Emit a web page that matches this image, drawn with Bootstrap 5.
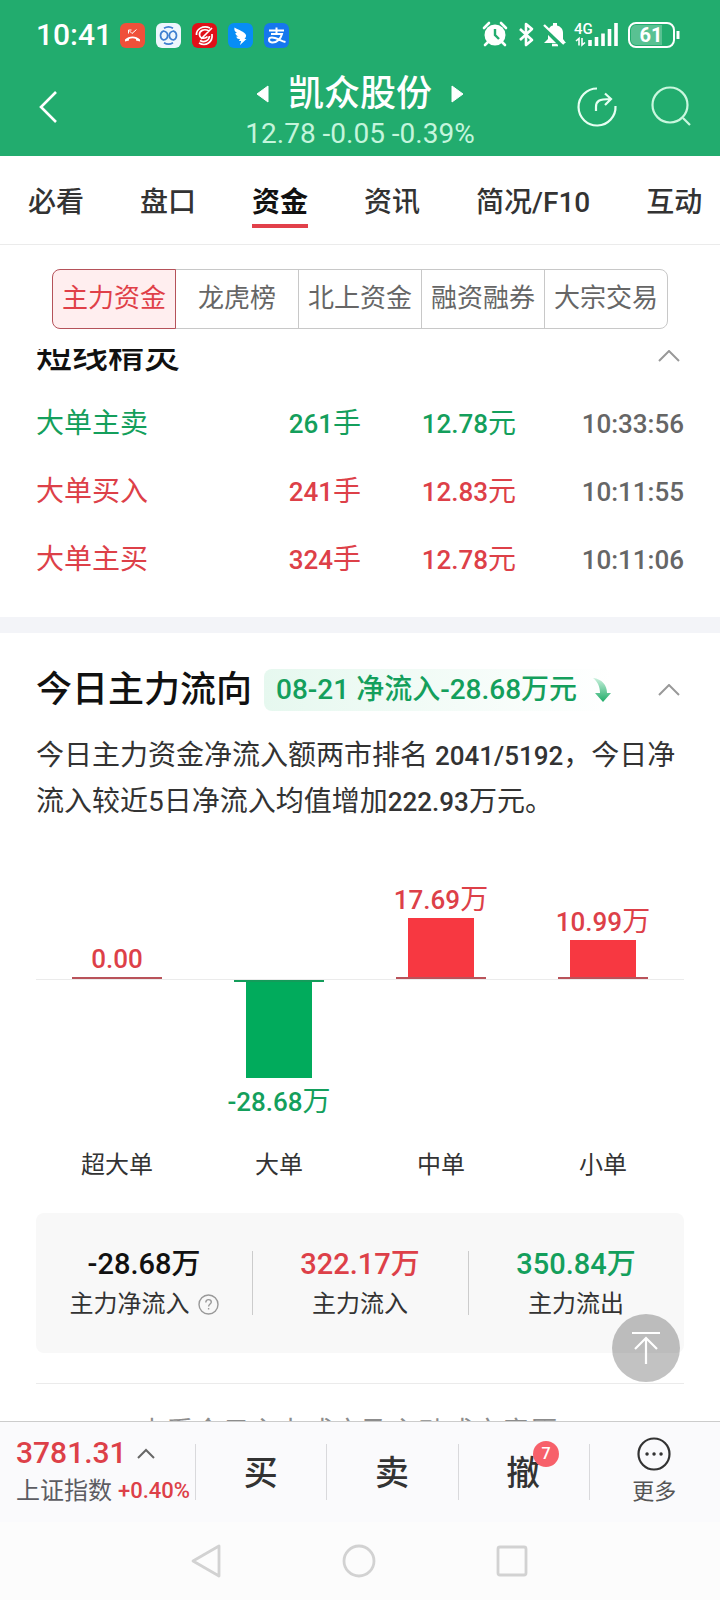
<!DOCTYPE html>
<html lang="zh-CN">
<head>
<meta charset="utf-8">
<meta name="viewport" content="width=device-width, initial-scale=1">
<title>凯众股份 - 主力资金</title>
<link href="https://cdn.jsdelivr.net/npm/bootstrap@5.3.0/dist/css/bootstrap.min.css" rel="stylesheet">
<style>
  :root { --up: #dd4048; --down: #149f5c; --ink: #111; --ink-2: #333; --ink-3: #666; }
  body { font-family: Roboto, "Noto Sans CJK SC", sans-serif; font-size: 28px; line-height: 40px; color: var(--ink-2); background: #fff; }
  svg { display: block; flex: none; fill: none; }
  a { color: inherit; text-decoration: none; }
  button { font: inherit; color: inherit; background: none; border: 0; padding: 0; }
  .app { height: 100vh; }
  .fig { font-size: 26px; font-weight: 500; }
  .up { color: var(--up) !important; }
  .down { color: var(--down) !important; }

  .top { background: #22ac6e; color: #fff; height: 156px; }
  .status { padding: 14px 40px 0 36px; height: 56px; }
  .clock { font-size: 30px; font-weight: 500; width: 84px; }
  .apps { gap: 11px; }
  .titlebar { display: grid; grid-template-columns: 1fr auto 1fr; height: 96px; padding: 0 28px; }
  .titlebar .side { padding-top: 6px; }
  .stock { font-size: 36px; line-height: 44px; font-weight: 500; gap: 19px; }
  .quote { color: #c4f5dc; line-height: 36px; }

  .tabs { height: 89px; padding: 4px 18px 0 28px; gap: 56px; font-size: 28px; border-bottom: 1px solid #ebebeb; overflow: hidden; }
  .tabs a { white-space: nowrap; font-weight: 500; line-height: 38px; border-bottom: 4px solid transparent; padding: 8px 0 2px; }
  .tabs a.on { color: var(--ink); font-weight: 700; border-color: #e2404a; }

  .seg { margin: 24px 52px 20px; height: 60px; font-size: 26px; color: var(--ink-3); }
  .seg a { border: 1px solid #c8c8c8; margin-left: -1px; line-height: 56px; text-align: center; flex: 1 1 0; white-space: nowrap; }
  .seg a:first-child { border-radius: 8px 0 0 8px; margin-left: 0; }
  .seg a:last-child { border-radius: 0 8px 8px 0; }
  .seg a.on { background: #ffeeef; border-color: #b5525a; color: #e03f48; z-index: 1; }

  .pane { padding: 0 36px; }
  .scrolled { margin-top: -18px; }
  h2 { font-size: 36px; line-height: 50px; font-weight: 500; color: var(--ink); margin: 0; }
  .fold { padding: 0 4px; }

  .trades { width: 100%; table-layout: fixed; margin: 9px 0 23px; }
  .trades td { height: 68px; padding: 0; vertical-align: middle; }
  .trades td:nth-child(1) { width: 39%; }
  .trades td:nth-child(2) { width: 133px; }
  .trades td:nth-child(4) { width: 20%; text-align: right; color: var(--ink-3); }
  .band { height: 16px; background: #f3f4f8; }

  .net { background: linear-gradient(90deg, #e6f8ef, #fff); border-radius: 8px; padding: 1px 0 1px 12px; margin-left: 12px; gap: 15px; font-weight: 500; }
  .brief { line-height: 46px; margin: 18px 0 0; }

  .chart { display: grid; grid-template-columns: repeat(4, 1fr); margin-top: 54px; }
  .over { height: 101px; border-bottom: 1px solid #ebebeb; line-height: 36px; }
  .under { height: 167px; line-height: 36px; }
  .tip { width: 90px; height: 2px; }
  .stick { width: 66px; }
  .bg-up { background: #f73841; }
  .bg-down { background: #01ab5c; }
  .tip.bg-up { background: #b9535a; }
  .tip.bg-down { background: #139c5a; }
  .below { padding-top: 6px; }
  .kind { font-size: 24px; line-height: 36px; }

  .sums { background: #f8f8f8; border-radius: 8px; margin-top: 30px; padding: 30px 0; height: 140px; }
  .sums > div { flex: 1 1 0; position: relative; }
  .sums > div + div::before { content: ""; position: absolute; left: 0; top: 8px; height: 64px; width: 1px; background: #ccc; }
  .sum { font-size: 29px; font-weight: 500; color: var(--ink); line-height: 42px; }
  .sum-name { font-size: 24px; line-height: 38px; gap: 8px; }
  .more { margin-top: 30px; border-top: 1px solid #ebebeb; padding-top: 29px; color: #8c8c8c; }
  .more a { gap: 12px; }
  .to-top { position: absolute; right: 40px; bottom: 39px; width: 68px; height: 68px; border-radius: 50%; background: rgba(0, 0, 0, .24); }

  .dock { height: 101px; background: #fafafc; border-top: 1px solid #ccc; }
  .dock > * { flex: 1 1 0; position: relative; }
  .dock > * + *::before { content: ""; position: absolute; left: 0; top: 22px; height: 56px; width: 1px; background: #d9d9dc; }
  .dock .index { flex: 0 0 195px; padding: 10px 0 0 16px; }
  .index .last { font-size: 30px; line-height: 42px; font-weight: 500; gap: 10px; }
  .index .name { font-size: 24px; line-height: 34px; color: #5c5c62; gap: 6px; white-space: nowrap; }
  .index .pct { font-size: 22px; font-weight: 500; }
  .act { font-size: 34px; font-weight: 500; padding-top: 2px; }
  .count { position: absolute; left: 50%; top: 19px; margin-left: 10px; width: 26px; height: 26px; border-radius: 50%; background: #f7606a; color: #fff; font-size: 16px; line-height: 26px; }
  .extra { font-size: 22px; line-height: 32px; color: #555; gap: 4px; }
  .sys { height: 78px; background: #fcfcfc; padding: 0 192px 0 191px; }
</style>
</head>
<body>
<div class="app d-flex flex-column overflow-hidden">
  <header class="top flex-shrink-0">
    <div class="status d-flex align-items-center justify-content-between">
      <div class="d-flex align-items-center">
        <span class="clock">10:41</span>
        <div class="apps d-flex">
          <svg width="25" height="25" viewBox="0 0 25 25"><rect width="25" height="25" rx="6" fill="#f0503a"/><path d="M5 18.500v-2c4-4 11-4 15 0v2l-4-1v-1.500c-2-1-5-1-7 0v1.500z" fill="#fff"/><path d="M8.500 10.500V7h3M9 7.500l3 3 4.500-4" stroke="#fff"/></svg>
          <svg width="25" height="25" viewBox="0 0 25 25"><rect width="25" height="25" rx="6" fill="#eef6fd"/><path d="M8 5.200a8.500 8.500 0 0 1 9 0M8 19.800a8.500 8.500 0 0 0 9 0M7.500 8c5.500 1 5.500 8 0 9-4-1.500-4-7.500 0-9zM17.500 8c-5.500 1-5.500 8 0 9 4-1.500 4-7.500 0-9z" stroke="#3e7fd0" stroke-width="1.700"/></svg>
          <svg width="25" height="25" viewBox="0 0 25 25"><rect width="25" height="25" rx="6" fill="#e01018"/><path d="M18 5C11 2 4 6 4.500 12M7 20c7 4 14-1 13-9M17 8c-5-3-10 0-9.500 4s6 4 8 1.500M8 17.500c4 2.500 9 .500 9.500-4.500M20 5L9 16" stroke="#fff" stroke-width="1.700"/></svg>
          <svg width="25" height="25" viewBox="0 0 25 25"><rect width="25" height="25" rx="6" fill="#078df5"/><path d="M6.500 4.500c4 2.500 10 4 11.500 7.500.500 1.500-.800 3-1.500 4h2L12 22l1.200-4H11l1-2c-3 0-3.500-1.500-3.500-2.500h2C7.500 12 7.500 11 7.500 10h1.500C6.500 8.500 6 6.500 6.500 4.500z" fill="#fff"/></svg>
          <svg width="25" height="25" viewBox="0 0 25 25"><rect width="25" height="25" rx="6" fill="#1677ee"/><path d="M5 7.500h15M12.500 4.500V11M7 11h11c-1 4-5 9-10 8.500-4-.500-4-5 0-5s9 3.500 13.500 4.500" stroke="#fff" stroke-width="2"/></svg>
        </div>
      </div>
      <svg width="198" height="28" viewBox="0 0 198 28">
        <circle cx="13" cy="14" r="10.500" fill="#fff"/><path d="M2 7l5-5M24 7l-5-5M6 21l-3 3M20 21l3 3" stroke="#fff" stroke-width="2.600" stroke-linecap="round"/>
        <path d="M13 8v6l4 4" stroke="#22ac6e" stroke-width="2.400"/>
        <path d="M38 8l12 11-6 5V3l6 5-12 11" stroke="#fff" stroke-width="2.600" stroke-linejoin="round"/>
        <path d="M62 22l4-4V12c0-4 2-7 5-7.500V2h4v2.500c4 1 6 4 6 7.500v6l3 4z" fill="#fff"/><path d="M70 24h6" stroke="#fff" stroke-width="2.600"/>
        <path d="M61 6l20 20" stroke="#22ac6e" stroke-width="4"/><path d="M62 4l20 19" stroke="#fff" stroke-width="2.400"/>
        <text x="92" y="13" fill="#fff" font-size="15" font-weight="500">4G</text>
        <path d="M94 20l3-2.500v7M100 17v7l3-2.500" stroke="#fff" stroke-width="1.600"/>
        <path d="M108 19v6M114.500 16v9M121 12.500V25M127.500 8v17M134 2v23" stroke="#fff" stroke-width="3.600"/>
        <rect x="147" y="2" width="45" height="24" rx="7" stroke="#fff" stroke-width="2"/><path d="M154 4h26v20h-26a5 5 0 0 1-5-5V9a5 5 0 0 1 5-5z" fill="#fff" opacity=".25"/>
        <path d="M196 10v8" stroke="#fff" stroke-width="3"/>
        <text x="169" y="21" text-anchor="middle" fill="#fff" font-size="20" font-weight="700">61</text>
      </svg>
    </div>
    <div class="titlebar">
      <div class="side d-flex align-items-center ps-2"><button type="button" aria-label="返回"><svg width="24" height="36" viewBox="0 0 24 36"><path d="M20 3L5 18l15 15" stroke="#fff" stroke-width="2.600"/></svg></button></div>
      <div class="text-center pt-3">
        <div class="stock d-flex align-items-center justify-content-center">
          <svg width="13" height="18" viewBox="0 0 13 18"><path d="M12 1v16L1 9z" fill="#fff" stroke="#fff" stroke-linejoin="round"/></svg>
          <span>凯众股份</span>
          <svg width="13" height="18" viewBox="0 0 13 18"><path d="M1 1v16L12 9z" fill="#fff" stroke="#fff" stroke-linejoin="round"/></svg>
        </div>
        <div class="quote">12.78 -0.05 -0.39%</div>
      </div>
      <div class="side d-flex justify-content-end align-items-center">
        <button type="button" aria-label="分享" class="me-4 pe-2"><svg width="42" height="42" viewBox="0 0 42 42" stroke="#e6fff2" stroke-width="2.200"><path d="M21 2.500A18.500 18.500 0 1 0 39.500 20M20 25v-4c0-6 3-8 14-8M29 7.500l6 5.500-6 6"/></svg></button>
        <button type="button" aria-label="搜索"><svg width="42" height="42" viewBox="0 0 42 42" stroke="#c9f7de" stroke-width="2.200"><circle cx="20" cy="19" r="17.500"/><path d="M33 32l7 7"/></svg></button>
      </div>
    </div>
  </header>

  <nav class="tabs d-flex align-items-center flex-shrink-0">
    <a href="#">必看</a><a href="#">盘口</a><a href="#" class="on">资金</a><a href="#">资讯</a><a href="#">简况/F10</a><a href="#">互动</a>
  </nav>
  <nav class="seg d-flex flex-shrink-0">
    <a href="#" class="on position-relative">主力资金</a><a href="#">龙虎榜</a><a href="#">北上资金</a><a href="#">融资融券</a><a href="#">大宗交易</a>
  </nav>

  <div class="position-relative flex-fill d-flex flex-column" style="min-height:0">
  <main class="flex-fill overflow-hidden">
    <section class="pane scrolled">
      <div class="d-flex justify-content-between align-items-center">
        <h2>短线精灵</h2>
        <button type="button" class="fold" aria-label="收起"><svg width="22" height="12" viewBox="0 0 22 12"><path d="M1 11L11 1l10 10" stroke="#999" stroke-width="2"/></svg></button>
      </div>
      <table class="trades">
        <tr><td class="down">大单主卖</td><td class="down"><span class="fig">261</span>手</td><td class="down"><span class="fig">12.78</span>元</td><td><span class="fig">10:33:56</span></td></tr>
        <tr><td class="up">大单买入</td><td class="up"><span class="fig">241</span>手</td><td class="up"><span class="fig">12.83</span>元</td><td><span class="fig">10:11:55</span></td></tr>
        <tr><td class="up">大单主买</td><td class="up"><span class="fig">324</span>手</td><td class="up"><span class="fig">12.78</span>元</td><td><span class="fig">10:11:06</span></td></tr>
      </table>
    </section>
    <div class="band"></div>
    <section class="pane pt-4 mt-2">
      <div class="d-flex align-items-center">
        <h2>今日主力流向</h2>
        <div class="net down d-flex align-items-center">
          <span>08-21 净流入-28.68万元</span>
          <svg width="20" height="26" viewBox="0 0 20 26"><defs><linearGradient id="fall" x2="0" y2="1"><stop stop-color="#c9f0dc"/><stop offset="1" stop-color="#1fac68"/></linearGradient></defs><path d="M1 1c9 1 14 7 14 15h4l-8 9-8-9h5C8 10 6 5 1 1z" fill="url(#fall)"/></svg>
        </div>
        <button type="button" class="fold ms-auto" aria-label="收起"><svg width="22" height="12" viewBox="0 0 22 12"><path d="M1 11L11 1l10 10" stroke="#999" stroke-width="2"/></svg></button>
      </div>
      <p class="brief">今日主力资金净流入额两市排名 <span class="fig">2041/5192</span>，今日净流入较近5日净流入均值增加<span class="fig">222.93</span>万元。</p>

      <div class="chart">
        <div class="over d-flex flex-column align-items-center justify-content-end up"><span class="fig">0.00</span><div class="tip bg-up"></div></div>
        <div class="over"></div>
        <div class="over d-flex flex-column align-items-center justify-content-end up"><span><span class="fig">17.69</span>万</span><div class="stick bg-up" style="height:59px"></div><div class="tip bg-up"></div></div>
        <div class="over d-flex flex-column align-items-center justify-content-end up"><span><span class="fig">10.99</span>万</span><div class="stick bg-up" style="height:37px"></div><div class="tip bg-up"></div></div>
        <div class="under"></div>
        <div class="under d-flex flex-column align-items-center down"><div class="tip bg-down"></div><div class="stick bg-down" style="height:96px"></div><span class="below"><span class="fig">-28.68</span>万</span></div>
        <div class="under"></div>
        <div class="under"></div>
        <div class="kind text-center">超大单</div><div class="kind text-center">大单</div><div class="kind text-center">中单</div><div class="kind text-center">小单</div>
      </div>

      <div class="sums d-flex text-center">
        <div><div class="sum">-28.68万</div><div class="sum-name d-flex align-items-center justify-content-center">主力净流入 <svg width="21" height="21" viewBox="0 0 21 21" stroke="#999"><circle cx="10.500" cy="10.500" r="9.500" stroke-width="1.400"/><path d="M7.800 8.500c0-4 5.500-3.500 5.500-.500 0 2-2.700 2-2.700 4.500M10.600 14v1.600" stroke-width="1.400"/></svg></div></div>
        <div><div class="sum up">322.17万</div><div class="sum-name">主力流入</div></div>
        <div><div class="sum down">350.84万</div><div class="sum-name">主力流出</div></div>
      </div>
      <div class="more"><a href="#" class="d-flex align-items-center justify-content-center">查看今日主力成交及主动成交意愿<svg width="12" height="20" viewBox="0 0 12 20"><path d="M2 1l8 9-8 9" stroke="#999" stroke-width="2"/></svg></a></div>
    </section>
  </main>
  <button type="button" class="to-top d-flex align-items-center justify-content-center" aria-label="回到顶部"><svg width="32" height="34" viewBox="0 0 32 34"><path d="M2 2h28M16 33V7M5 18L16 7l11 11" stroke="#fff" stroke-width="2.200"/></svg></button>
  </div>

  <footer class="flex-shrink-0">
    <div class="dock d-flex">
      <button type="button" class="index d-flex flex-column align-items-start">
        <span class="last up d-flex align-items-center">3781.31<svg width="18" height="11" viewBox="0 0 18 11"><path d="M1 10l8-8 8 8" stroke="#666" stroke-width="2"/></svg></span>
        <span class="name d-flex align-items-center">上证指数<span class="pct up">+0.40%</span></span>
      </button>
      <button type="button" class="act">买</button>
      <button type="button" class="act">卖</button>
      <button type="button" class="act">撤<span class="count">7</span></button>
      <button type="button" class="extra d-flex flex-column align-items-center justify-content-center"><svg width="36" height="36" viewBox="0 0 36 36"><circle cx="18" cy="18" r="15.500" stroke="#333" stroke-width="2.200"/><path d="M11 18h.1M18 18h.1M25 18h.1" stroke="#333" stroke-width="3.400" stroke-linecap="round"/></svg>更多</button>
    </div>
    <div class="sys d-flex align-items-center justify-content-between">
      <button type="button" aria-label="返回"><svg width="30" height="34" viewBox="0 0 30 34"><path d="M28 2v30L2 17z" stroke="#d2d2d2" stroke-width="2.800" stroke-linejoin="round"/></svg></button>
      <button type="button" aria-label="主页"><svg width="34" height="34" viewBox="0 0 34 34"><circle cx="17" cy="17" r="15" stroke="#d2d2d2" stroke-width="2.800"/></svg></button>
      <button type="button" aria-label="最近任务"><svg width="32" height="32" viewBox="0 0 32 32"><rect x="2" y="2" width="28" height="28" rx="2" stroke="#d2d2d2" stroke-width="2.800"/></svg></button>
    </div>
  </footer>
</div>
<script src="https://cdn.jsdelivr.net/npm/bootstrap@5.3.0/dist/js/bootstrap.bundle.min.js"></script>
</body>
</html>
